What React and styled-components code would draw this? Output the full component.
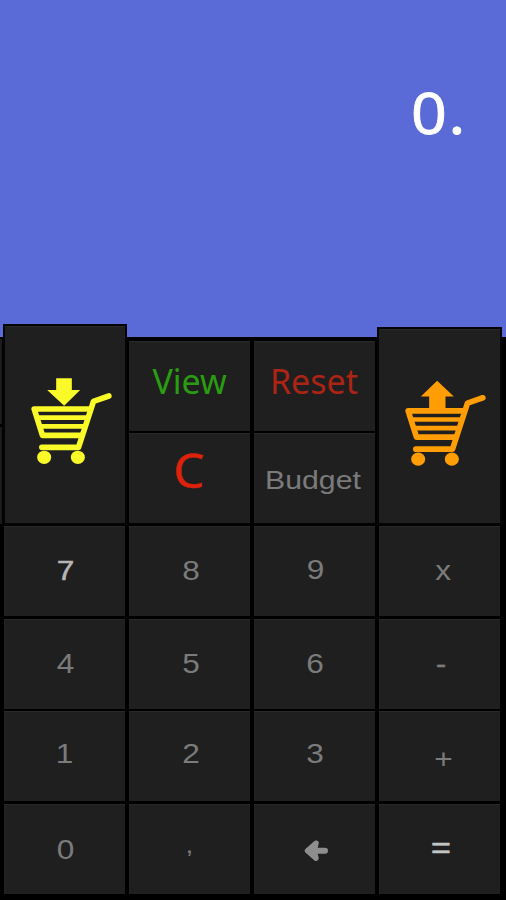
import React from 'react';
import styled, { createGlobalStyle, css } from 'styled-components';

const GlobalStyle = createGlobalStyle`
  *, *::before, *::after { box-sizing: border-box; }
  body { margin: 0; background: #000; }
`;

const Calculator = styled.main`
  width: 506px;
  height: 900px;
  display: flex;
  flex-direction: column;
  overflow: hidden;
  background: #000;
`;

const Display = styled.header`
  flex: 0 0 337px;
  display: flex;
  justify-content: flex-end;
  align-items: flex-start;
  padding: 73px 39px 0 0;
  background: #5a6bd8;
  color: #fff;
`;

const Value = styled.output`
  font: 400 57px/78px 'Noto Sans', sans-serif;
  letter-spacing: 1.5px;
  -webkit-text-stroke: 0.8px currentColor;
  transform: scaleX(1.1);
  transform-origin: right;
`;

const Keypad = styled.section`
  position: relative;
  flex: 1;
  display: grid;
  grid-template-columns: 121.4px 121.4px 121.4px 121.4px;
  grid-template-rows: repeat(6, 90.2px);
  gap: 2.5px 3.5px;
  padding: 3.5px 0 0 4px;

  &::before {
    content: '';
    position: absolute;
    left: 0;
    top: 2px;
    width: 2px;
    height: 185px;
    background: linear-gradient(#1c1c1c 85px, #000 85px 88px, #1c1c1c 88px);
  }
`;

const face = css`
  display: flex;
  align-items: center;
  justify-content: center;
  margin: 0;
  padding: 0;
  border: 0;
  background: #1f1f1f;
  color: ${(p) => p.$color || '#7b7b7b'};
`;

const Key = styled.button`
  ${face}
  box-shadow: inset 0 1px #292929, inset 1px 0 #232323;
`;

const CartKey = styled.button`
  ${face}
  position: relative;
  z-index: 1;
  grid-row: 1 / span 2;
  grid-column: ${(p) => p.$column};
  margin-top: ${(p) => p.$raise}px;
  margin-left: ${(p) => p.$inset || 0}px;
  box-shadow: inset 0 1px #292929, 0 0 0 2px #050505;
`;

const Label = styled.span`
  font-family: ${(p) => (p.$humanist ? "'Noto Sans', sans-serif" : "'Liberation Sans', sans-serif")};
  font-size: ${(p) => p.$size || 27}px;
  font-weight: 400;
  line-height: 1;
  white-space: pre;
  -webkit-text-stroke: ${(p) => p.$weight || 0}px currentColor;
  transform: translate(${(p) => p.$x || 0}px, ${(p) => p.$y || 0}px) scaleX(${(p) => p.$stretch || 1.17});
`;

const CartIcon = styled.svg`
  flex: none;
  width: 85px;
  height: 93px;
  transform: translate(${(p) => p.$x}px, ${(p) => p.$y}px);
`;

const BackIcon = styled.svg`
  width: 25px;
  height: 23px;
  transform: translate(1.5px, 1.2px);
`;

function Cart({ up, x, y }) {
  return (
    <CartIcon viewBox="90 195 255 279" $x={x} $y={y} fill="currentColor" aria-hidden="true">
      <path d={up ? 'M191 207L241 254H216V293H167V254H142Z' : 'M170 205H217V240H242L194 287L143 240H170Z'} />
      <g fill="none" stroke="currentColor" strokeWidth="17" strokeLinecap="round" strokeLinejoin="round">
        <path d="M328 258L282 274L237 412H127" />
        <path d="M268 297H104L129 376H244" />
        <path d="M117 323H260M125 349H252" strokeWidth="14" strokeLinecap="butt" />
      </g>
      <ellipse cx="134" cy="442" rx="21" ry="20" />
      <ellipse cx="235" cy="442" rx="21" ry="20" />
    </CartIcon>
  );
}

const keys = [
  { text: 'View', color: '#2a9c12', humanist: true, size: 34, stretch: 1, x: 0, y: -5 },
  { text: 'Reset', color: '#ab2415', humanist: true, size: 34, stretch: 1, x: -0.5, y: -5 },
  { text: 'C', color: '#dc220c', humanist: true, size: 48, stretch: 1.03, weight: 0.5, x: 0, y: -8.5 },
  { text: 'Budget', size: 26.5, stretch: 1.14, x: -1, y: 2 },
  { text: '7', color: '#b5b5b5', weight: 0.5, x: 1, y: 1 },
  { text: '8', x: 1.5, y: 1 },
  { text: '9', x: 1, y: 0 },
  { text: 'x', x: 3.5, y: 1 },
  { text: '4', x: 1, y: 1 },
  { text: '5', x: 1.5, y: 1 },
  { text: '6', x: 0.5, y: 1 },
  { text: '-', weight: 0.3, x: 1.5, y: 1 },
  { text: '1', x: 0, y: -2 },
  { text: '2', x: 1.5, y: -2 },
  { text: '3', x: 0.5, y: -2 },
  { text: '+', x: 4.5, y: 3 },
  { text: '0', x: 1, y: 1 },
  { text: ',', size: 24, x: 0, y: -4 },
  { text: 'back' },
  { text: '=', color: '#c4c4c4', size: 29, weight: 0.6, x: 1.5, y: -1.5 },
];

export default function App() {
  return (
    <>
      <GlobalStyle />
      <Calculator>
        <Display>
          <Value>0.</Value>
        </Display>
        <Keypad>
          <CartKey $column={1} $raise={-14.5} $inset={1} $color="#fafa28" aria-label="Add to cart">
            <Cart x={6.5} y={-3} />
          </CartKey>
          <CartKey $column={4} $raise={-11.5} $color="#ff9d05" aria-label="Remove from cart">
            <Cart up x={6.5} y={-3.2} />
          </CartKey>
          {keys.map((key) =>
            key.text === 'back' ? (
              <Key key={key.text} $color="#8e8e8e" aria-label="Backspace">
                <BackIcon viewBox="0 0 25 23" aria-hidden="true">
                  <path
                    d="M12.5 4L4 11.5L12.5 19L10.5 11.5Z"
                    fill="currentColor"
                    stroke="currentColor"
                    strokeWidth="5.5"
                    strokeLinejoin="round"
                  />
                  <path d="M5 11.5H21.5" stroke="currentColor" strokeWidth="6" strokeLinecap="round" />
                </BackIcon>
              </Key>
            ) : (
              <Key key={key.text} $color={key.color}>
                <Label
                  $humanist={key.humanist}
                  $size={key.size}
                  $stretch={key.stretch}
                  $weight={key.weight}
                  $x={key.x}
                  $y={key.y}
                >
                  {key.text}
                </Label>
              </Key>
            ),
          )}
        </Keypad>
      </Calculator>
    </>
  );
}
